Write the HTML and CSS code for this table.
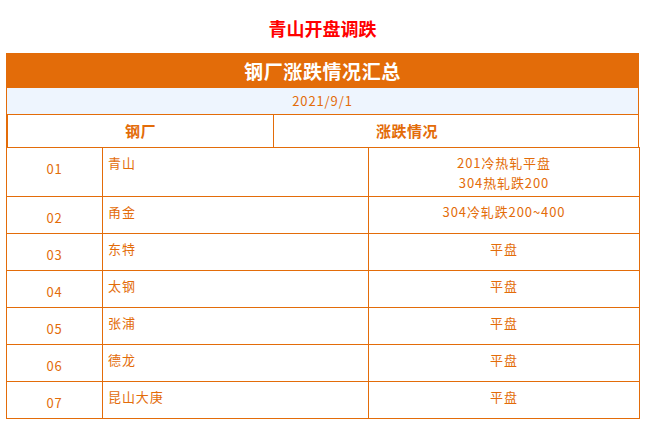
FILE: index.html
```html
<!DOCTYPE html>
<html lang="zh-CN">
<head>
<meta charset="utf-8">
<title>青山开盘调跌</title>
<link rel="stylesheet" href="styles.css">
</head>
<body>
<div class="page">
  <h1 class="title">青山开盘调跌</h1>
  <div class="sheet">
    <div class="banner">钢厂涨跌情况汇总</div>
    <div class="date">2021/9/1</div>
    <div class="heads">
      <div class="head head-mill">钢厂</div>
      <div class="head head-change">涨跌情况</div>
    </div>
    <table class="data">
      <colgroup>
        <col class="c-no">
        <col class="c-mill">
        <col class="c-change">
      </colgroup>
      <tbody>
        <tr class="tall"><td class="no">01</td><td class="mill">青山</td><td class="change">201冷热轧平盘<br>304热轧跌200</td></tr>
        <tr><td class="no">02</td><td class="mill">甬金</td><td class="change">304冷轧跌200~400</td></tr>
        <tr><td class="no">03</td><td class="mill">东特</td><td class="change">平盘</td></tr>
        <tr><td class="no">04</td><td class="mill">太钢</td><td class="change">平盘</td></tr>
        <tr><td class="no">05</td><td class="mill">张浦</td><td class="change">平盘</td></tr>
        <tr><td class="no">06</td><td class="mill">德龙</td><td class="change">平盘</td></tr>
        <tr><td class="no">07</td><td class="mill">昆山大庚</td><td class="change">平盘</td></tr>
      </tbody>
    </table>
  </div>
</div>
</body>
</html>
```

FILE: styles.css
```css
html, body {
  margin: 0;
  padding: 0;
  background: #ffffff;
}

body {
  font-family: "Noto Sans CJK SC", "Noto Sans", sans-serif;
  color: #e36c09;
}

.page {
  padding: 0 8px 0 6px;
}

.title {
  margin: 0;
  padding-top: 17px;
  height: 36px;
  line-height: 22px;
  font-size: 18px;
  font-weight: bold;
  color: #ff0000;
  text-align: center;
}

.sheet {
  width: 633px;
}

.banner {
  height: 35px;
  line-height: 35px;
  background: #e36c09;
  color: #ffffff;
  font-size: 19px;
  font-weight: bold;
  letter-spacing: 0.6px;
  text-align: center;
}

.date {
  height: 26px;
  line-height: 26px;
  background: #eef5fe;
  border-left: 1px solid #e36c09;
  border-right: 1px solid #e36c09;
  box-sizing: border-box;
  font-size: 13px;
  letter-spacing: 0.9px;
  text-align: center;
}

.heads {
  display: flex;
  height: 33px;
  box-sizing: border-box;
  border-top: 1px solid #e36c09;
  border-left: 2px solid #e36c09;
  border-right: 1px solid #e36c09;
}

.head {
  line-height: 32px;
  font-size: 15px;
  font-weight: bold;
  letter-spacing: 0.5px;
}

.head-mill {
  width: 265px;
  border-right: 1px solid #e36c09;
  text-align: center;
}

.head-change {
  flex: 1;
  padding-left: 102px;
}

.data {
  width: 633px;
  border-collapse: collapse;
  table-layout: fixed;
}

.c-no { width: 96px; }
.c-mill { width: 266px; }
.c-change { width: 271px; }

.data td {
  border: 1px solid #e36c09;
  height: 37px;
  box-sizing: border-box;
  padding: 0;
  vertical-align: top;
  font-size: 13px;
  line-height: 20px;
  letter-spacing: 0.9px;
}

.data tr.tall td {
  height: 49px;
}

.data td.no {
  padding-top: 11px;
  text-align: center;
}

.data td.mill {
  padding: 5px 0 0 5px;
  text-align: left;
}

.data td.change {
  padding-top: 5px;
  text-align: center;
}
```
